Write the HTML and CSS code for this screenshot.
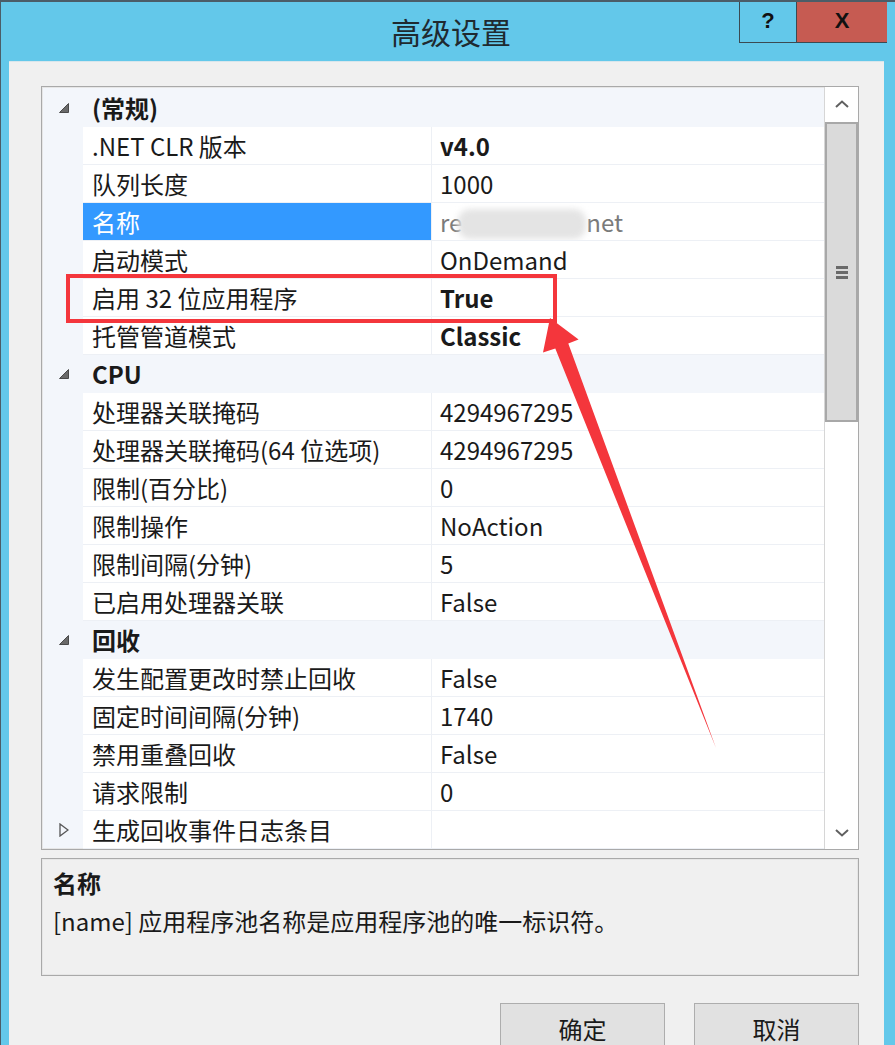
FILE: index.html
```html
<!DOCTYPE html>
<html lang="zh-CN">
<head>
<meta charset="utf-8">
<title>高级设置</title>
<link rel="stylesheet" href="styles.css">
</head>
<body>
<div class="window">
  <div class="titlebar">
    <div class="tb-side"></div>
    <div class="title">高级设置</div>
    <div class="tb-side tb-right">
      <div class="cbtn help">?</div>
      <div class="cbtn close">X</div>
    </div>
  </div>
  <div class="client">
    <div class="pgrid">
      <div class="rows">
        <div class="row cat"><span class="gut"><svg class="exp" viewBox="0 0 10 10" width="10" height="10"><polygon points="9.5,0.5 9.5,9.5 0.5,9.5"/></svg></span><span class="name">(常规)</span><span class="val"></span></div>
        <div class="row"><span class="gut"></span><span class="name">.NET CLR 版本</span><span class="val b">v4.0</span></div>
        <div class="row"><span class="gut"></span><span class="name">队列长度</span><span class="val">1000</span></div>
        <div class="row sel"><span class="gut"></span><span class="name">名称</span><span class="val ro">re<span class="blur"></span>net</span></div>
        <div class="row"><span class="gut"></span><span class="name">启动模式</span><span class="val">OnDemand</span></div>
        <div class="row"><span class="gut"></span><span class="name">启用 32 位应用程序</span><span class="val b">True</span></div>
        <div class="row"><span class="gut"></span><span class="name">托管管道模式</span><span class="val b">Classic</span></div>
        <div class="row cat"><span class="gut"><svg class="exp" viewBox="0 0 10 10" width="10" height="10"><polygon points="9.5,0.5 9.5,9.5 0.5,9.5"/></svg></span><span class="name">CPU</span><span class="val"></span></div>
        <div class="row"><span class="gut"></span><span class="name">处理器关联掩码</span><span class="val">4294967295</span></div>
        <div class="row"><span class="gut"></span><span class="name">处理器关联掩码(64 位选项)</span><span class="val">4294967295</span></div>
        <div class="row"><span class="gut"></span><span class="name">限制(百分比)</span><span class="val">0</span></div>
        <div class="row"><span class="gut"></span><span class="name">限制操作</span><span class="val">NoAction</span></div>
        <div class="row"><span class="gut"></span><span class="name">限制间隔(分钟)</span><span class="val">5</span></div>
        <div class="row"><span class="gut"></span><span class="name">已启用处理器关联</span><span class="val">False</span></div>
        <div class="row cat"><span class="gut"><svg class="exp" viewBox="0 0 10 10" width="10" height="10"><polygon points="9.5,0.5 9.5,9.5 0.5,9.5"/></svg></span><span class="name">回收</span><span class="val"></span></div>
        <div class="row"><span class="gut"></span><span class="name">发生配置更改时禁止回收</span><span class="val">False</span></div>
        <div class="row"><span class="gut"></span><span class="name">固定时间间隔(分钟)</span><span class="val">1740</span></div>
        <div class="row"><span class="gut"></span><span class="name">禁用重叠回收</span><span class="val">False</span></div>
        <div class="row"><span class="gut"></span><span class="name">请求限制</span><span class="val">0</span></div>
        <div class="row"><span class="gut"><svg class="col" viewBox="0 0 10 14" width="10" height="14"><polygon points="1,1 9,7 1,13"/></svg></span><span class="name">生成回收事件日志条目</span><span class="val"></span></div>
      </div>
      <div class="vscroll">
        <div class="sb-btn"><svg viewBox="0 0 14 8" width="14" height="8"><polyline points="1,7 7,1.5 13,7"/></svg></div>
        <div class="thumb"><span class="grip"></span></div>
        <div class="track"></div>
        <div class="sb-btn"><svg viewBox="0 0 14 8" width="14" height="8"><polyline points="1,1 7,6.5 13,1"/></svg></div>
      </div>
    </div>
    <div class="desc">
      <div class="desc-title">名称</div>
      <div class="desc-text">[name] 应用程序池名称是应用程序池的唯一标识符。</div>
    </div>
    <div class="buttons">
      <div class="btn">确定</div>
      <div class="btn">取消</div>
    </div>
  </div>
  <svg class="annot" viewBox="0 0 895 1045" width="895" height="1045">
    <rect x="68" y="276" width="487" height="45" fill="none" stroke="#f4363c" stroke-width="4"/>
    <polygon fill="#f4363c" points="550,318 578.6,339.6 568.3,343.5 716,748 555.3,348.5 543,352.5"/>
  </svg>
</div>
</body>
</html>
```

FILE: styles.css
```css
html, body {
  margin: 0;
  padding: 0;
}

body {
  width: 895px;
  height: 1045px;
  overflow: hidden;
  background: #63c8ea;
  font-family: "Noto Sans CJK SC", "Noto Sans", sans-serif;
  color: #1a1a1a;
}

.window {
  position: relative;
  width: 895px;
  height: 1045px;
  box-sizing: border-box;
  border-top: 2px solid #4b5d68;
  border-left: 1px solid #4b5d68;
  background: #63c8ea;
  display: flex;
  flex-direction: column;
  overflow: hidden;
}

.titlebar {
  flex-shrink: 0;
  height: 59px;
  display: grid;
  grid-template-columns: 1fr auto 1fr;
  align-items: start;
}

.title {
  font-size: 30px;
  line-height: 30px;
  margin-top: 14px;
  color: #1f2a30;
  padding-left: 6px;
}

.tb-right {
  display: flex;
  justify-content: flex-end;
  margin-right: 8px;
  margin-top: -2px;
}

.cbtn {
  height: 43px;
  box-sizing: border-box;
  display: flex;
  align-items: center;
  justify-content: center;
  font-family: "Liberation Sans", Arial, sans-serif;
  font-weight: bold;
  font-size: 22px;
  color: #111;
}

.help {
  width: 57px;
  border: 1px solid #3b4a52;
  border-right: none;
  border-top: none;
  background: #63c8ea;
}

.close {
  width: 91px;
  background: #c65b52;
  border-bottom: 1px solid #3b4a52;
  border-left: 1px solid #3b4a52;
}

.client {
  flex: 1 0 auto;
  margin: 0 11px 0 8px;
  background: #f0f0f0;
  border-top: 1px solid #d8e6ec;
  padding: 24px 25px 0 32px;
  display: flex;
  flex-direction: column;
}

.pgrid {
  flex-shrink: 0;
  height: 764px;
  box-sizing: border-box;
  border: 1px solid #a9a9a9;
  box-shadow: inset 0 0 0 1px #e6e6e6;
  background: #f3f6fb;
  display: flex;
}

.rows {
  flex: 1;
  padding-top: 2px;
  display: flex;
  flex-direction: column;
}

.row {
  height: 38px;
  flex-shrink: 0;
  display: grid;
  grid-template-columns: 41px 349px 1fr;
  font-size: 24px;
  line-height: 37px;
}

.gut {
  display: flex;
  align-items: center;
  justify-content: center;
  padding-left: 3px;
}

.row .name,
.row .val {
  background: #ffffff;
  border-bottom: 1px solid #edf0f5;
  white-space: nowrap;
  overflow: hidden;
}

.row .name {
  padding-left: 9px;
  border-right: 1px solid #edf0f5;
}

.row .val {
  padding-left: 8px;
}

.row.cat .name,
.row.cat .val {
  background: #f3f6fb;
  border-color: #f3f6fb;
  font-weight: bold;
}

.b {
  font-weight: bold;
}

.row.sel .name {
  background: #3399ff;
  color: #ffffff;
}

.val.ro {
  color: #7a7a7a;
}

.blur {
  display: inline-block;
  width: 128px;
  height: 30px;
  vertical-align: -7px;
  background: #e4e4e4;
  border-radius: 12px;
  filter: blur(3px);
  margin: 0 0 0 -4px;
}

.exp polygon {
  fill: #6a6a6a;
  stroke: #4a4a4a;
  stroke-width: 1;
}

.col polygon {
  fill: none;
  stroke: #555555;
  stroke-width: 1.3;
}

.vscroll {
  width: 34px;
  background: #ffffff;
  border-left: 1px solid #d6d6d6;
  box-sizing: border-box;
  display: flex;
  flex-direction: column;
  padding-top: 1px;
}

.sb-btn {
  height: 32px;
  flex-shrink: 0;
  display: flex;
  align-items: center;
  justify-content: center;
  background: #ffffff;
}

.sb-btn polyline {
  fill: none;
  stroke: #606060;
  stroke-width: 2;
}

.thumb {
  height: 300px;
  flex-shrink: 0;
  margin-top: 2px;
  box-sizing: border-box;
  background: #dadada;
  border: 2px solid #a8a8a8;
  display: flex;
  align-items: center;
  justify-content: center;
}

.grip {
  width: 12px;
  height: 3px;
  background: #6a6a6a;
  box-shadow: 0 5px 0 #6a6a6a, 0 -5px 0 #6a6a6a;
}

.track {
  flex: 1;
  background: #ffffff;
}

.desc {
  flex-shrink: 0;
  margin-top: 8px;
  height: 118px;
  box-sizing: border-box;
  border: 1px solid #a9a9a9;
  box-shadow: inset 0 0 0 1px #e6e6e6;
  background: #f0f0f0;
  padding: 11px 11px;
}

.desc-title {
  font-size: 24px;
  line-height: 26px;
  font-weight: bold;
}

.desc-text {
  font-size: 24px;
  line-height: 26px;
  margin-top: 12px;
}

.buttons {
  flex-shrink: 0;
  margin-top: 27px;
  display: flex;
  justify-content: flex-end;
  gap: 29px;
}

.btn {
  width: 165px;
  height: 52px;
  box-sizing: border-box;
  background: #e1e1e1;
  border: 1px solid #adadad;
  display: flex;
  align-items: flex-start;
  justify-content: center;
  font-size: 24px;
  line-height: 26px;
  padding-top: 12px;
}

.annot {
  position: absolute;
  left: -1px;
  top: -2px;
  pointer-events: none;
}
```
